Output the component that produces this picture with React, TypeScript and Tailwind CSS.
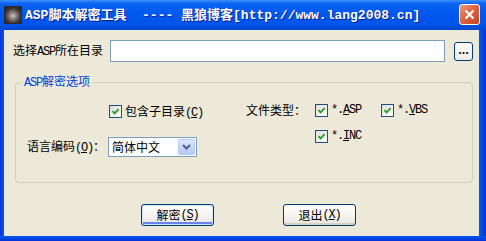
import React from "react";

const cjk = "font-['Noto_Sans_CJK_SC',sans-serif]";

function Mono({ children }: { children: React.ReactNode }) {
  return (
    <span className="font-['Liberation_Mono',monospace] text-[12px] tracking-[-1.2px]">
      {children}
    </span>
  );
}

function Check() {
  return (
    <span className="flex h-[13px] w-[13px] shrink-0 items-center justify-center border border-[#1C5180] bg-[linear-gradient(135deg,#DCDCD7,#FFFFFF)]">
      <svg width="9" height="9" viewBox="0 0 9 9">
        <path d="M1.5 4.2 L3.6 6.3 L7.6 2.2" fill="none" stroke="#21A121" strokeWidth="1.9" />
      </svg>
    </span>
  );
}

function XpButton({ children, primary }: { children: React.ReactNode; primary?: boolean }) {
  return (
    <button
      className={
        "flex h-[22px] w-[73px] items-center justify-center rounded-[3px] border border-[#003C74] bg-[linear-gradient(to_bottom,#FFFFFF,#F3F2EE_60%,#E5E3DA)] text-[12px] text-black " +
        (primary
          ? "shadow-[inset_0_0_0_1px_#CEE7FF,inset_0_-2px_0_1px_#6982EE]"
          : "shadow-[inset_0_-2px_0_0_#D6D0C5]")
      }
    >
      {children}
    </button>
  );
}

export default function App() {
  return (
    <div className={`flex h-[241px] w-[486px] flex-col overflow-hidden bg-[#0055EA] ${cjk}`}>
      {/* title bar */}
      <div className="flex h-[30px] items-center bg-[linear-gradient(to_bottom,#3D8FF8_0%,#0A63F2_12%,#0058EE_45%,#0055EA_80%,#0046D0_100%)] pb-[1px] pl-[5px] pr-[6px]">
        <div className="h-[16px] w-[16px] bg-[radial-gradient(circle_at_50%_55%,#CFC4C4_0%,#8A7A78_30%,#3A3434_65%,#1C1C1E_100%)] shadow-[0_0_0_1px_#2A2A2E]" />
        <div className="ml-[4px] flex-1 whitespace-pre text-[13px] font-bold text-white [text-shadow:1px_1px_0_#0A1E8C]">
          <span className="font-['Liberation_Mono',monospace]">ASP</span>脚本解密工具
          <span className="font-['Liberation_Mono',monospace]">  ---- </span>黑狼博客
          <span className="font-['Liberation_Mono',monospace]">[http://www.lang2008.cn]</span>
        </div>
        <div className="flex h-[21px] w-[21px] items-center justify-center rounded-[3px] border border-white bg-[linear-gradient(135deg,#EE9A7C,#E06A46_40%,#C8401E)]">
          <svg width="11" height="11" viewBox="0 0 11 11">
            <path d="M1.5 1.5 L9.5 9.5 M9.5 1.5 L1.5 9.5" stroke="white" strokeWidth="2.2" />
          </svg>
        </div>
      </div>

      {/* body */}
      <div className="flex flex-1">
        <div className="w-[4px] bg-[linear-gradient(to_right,#0831D9,#0058EE)]" />
        <div className="flex-1 bg-[#ECE9D8] text-[12px] text-black">
          {/* directory row */}
          <div className="mt-[10px] flex items-center pl-[9px]">
            <span className="w-[97px]">
              选择<Mono>ASP</Mono>所在目录
            </span>
            <div className="h-[22px] w-[335px] border border-[#7F9DB9] bg-white" />
            <button className="ml-[9px] flex h-[19px] w-[19px] items-center justify-center rounded-[3px] border border-[#003C74] bg-[linear-gradient(to_bottom,#FFFFFF,#ECEBE6)] pb-[3px] text-[11px] font-bold leading-none">
              ...
            </button>
          </div>

          {/* options group */}
          <fieldset className="ml-[11px] mt-[12px] h-[109px] w-[458px] rounded-[4px] border border-[#D0D0BF]">
            <legend className="ml-[6px] px-[2px] text-[12px] leading-[14px] text-[#0046D5]">
              <Mono>ASP</Mono>解密选项
            </legend>
            <div className="flex">
              <div className="w-[216px] pt-[15px]">
                <label className="flex h-[13px] items-center gap-[3px] pl-[93px]">
                  <Check />
                  <span>
                    包含子目录<Mono>(<u>C</u>)</Mono>
                  </span>
                </label>
                <div className="mt-[19px] flex items-center pl-[11px]">
                  <span className="w-[81px]">
                    语言编码<Mono>(<u>O</u>)</Mono>：
                  </span>
                  <div className="flex h-[20px] w-[89px] items-center border border-[#7F9DB9] bg-white p-[1px]">
                    <span className="flex-1 pl-[2px]">简体中文</span>
                    <span className="flex h-[16px] w-[17px] items-center justify-center rounded-[2px] border border-[#B8CCF5] bg-[linear-gradient(to_bottom,#DCE6FD,#B4C8F6)]">
                      <svg width="9" height="6" viewBox="0 0 9 6">
                        <path d="M1 1 L4.5 4.5 L8 1" fill="none" stroke="#4D6185" strokeWidth="2" />
                      </svg>
                    </span>
                  </div>
                </div>
              </div>
              <div className="pl-[14px] pt-[11px]">
                <div className="flex items-center">
                  <span className="w-[69px]">文件类型：</span>
                  <label className="flex w-[66px] items-center gap-[3px]">
                    <Check />
                    <Mono>
                      *.<u>A</u>SP
                    </Mono>
                  </label>
                  <label className="flex items-center gap-[3px]">
                    <Check />
                    <Mono>
                      *.<u>V</u>BS
                    </Mono>
                  </label>
                </div>
                <div className="mt-[8px] flex items-center pl-[69px]">
                  <label className="flex items-center gap-[3px]">
                    <Check />
                    <Mono>
                      *.<u>I</u>NC
                    </Mono>
                  </label>
                </div>
              </div>
            </div>
          </fieldset>

          {/* buttons */}
          <div className="mt-[21px] flex gap-[69px] pl-[137px]">
            <XpButton primary>
              解密<Mono>(<u>S</u>)</Mono>
            </XpButton>
            <XpButton>
              退出<Mono>(<u>X</u>)</Mono>
            </XpButton>
          </div>
        </div>
        <div className="w-[7px] bg-[linear-gradient(to_right,#0058EE,#0831D9)]" />
      </div>
      <div className="h-[5px] bg-[linear-gradient(to_bottom,#0058EE,#0831D9)]" />
    </div>
  );
}
